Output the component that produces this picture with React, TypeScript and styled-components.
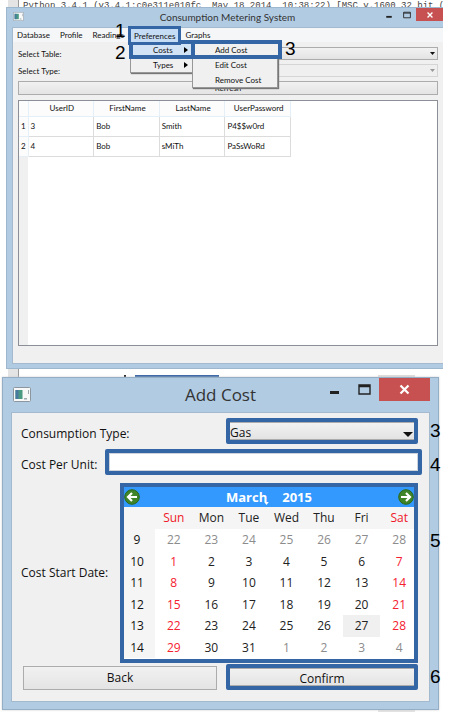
import React from "react";
import styled, { createGlobalStyle, css } from "styled-components";

const BLUE = "#3465a4";
const FRAME = "#b1cbe3";

const Global = createGlobalStyle`
  * { box-sizing: border-box; }
  body { margin: 0; background: #fff; color: #111; font-family: "Open Sans", "Noto Sans", sans-serif; }
  button, input, select { font: inherit; color: inherit; margin: 0; padding: 0; border-radius: 0; }
`;

const Page = styled.div`
  position: relative;
  display: flex;
  flex-direction: column;
  overflow: hidden;
`;

const ConsoleStrip = styled.div`
  height: 7px;
  margin: 0 7px 0 8px;
  padding-left: 15px;
  overflow: hidden;
  white-space: pre;
  font: 9px/13px "Liberation Mono", monospace;
  color: #444;
  background: linear-gradient(90deg, #e4e4e4 10px, #999 10px, #999 11px, #fff 11px);
`;

const MainWindow = styled.section`
  margin: 0 7px 0 6px;
  background: ${FRAME};
  border: 1px solid #9db7cf;
  border-right: 0;
  padding: 0 0 4px 5px;
  font: 8px/10px Lato, "Open Sans", sans-serif;
`;

const TitleBar = styled.header<{ $large?: boolean }>`
  display: grid;
  grid-template-columns: 1fr auto 1fr;
  align-items: start;
  height: ${p => (p.$large ? 34 : 19)}px;
  color: #333;
`;

const Title = styled.h1<{ $large?: boolean }>`
  margin: 0;
  font-weight: 400;
  font-size: ${p => (p.$large ? 17 : 10)}px;
  line-height: ${p => (p.$large ? 34 : 19)}px;
`;

const AppIcon = styled.svg<{ $large?: boolean }>`
  width: ${p => (p.$large ? 18 : 11)}px;
  height: ${p => (p.$large ? 15 : 9)}px;
  margin: ${p => (p.$large ? "9px 0 0 2px" : "4px 0 0 1px")};
`;

const WindowControls = styled.div`
  display: flex;
  justify-content: flex-end;
`;

const WindowButton = styled.button<{ $large?: boolean; $close?: boolean }>`
  display: grid;
  place-items: center;
  border: 0;
  height: ${p => (p.$large ? 23 : 13)}px;
  width: ${p => (p.$large ? (p.$close ? 51 : 30) : p.$close ? 27 : 18)}px;
  background: ${p => (p.$close ? "#c75050" : "transparent")};
  color: ${p => (p.$close ? "#fff" : "#222")};
  svg { width: ${p => (p.$large ? 13 : 8)}px; height: ${p => (p.$large ? 13 : 8)}px; display: block; }
`;

const Client = styled.div`
  background: #f0f0f0;
  border: 1px solid #a3b9cd;
  border-right: 0;
  position: relative;
`;

const MenuBar = styled.nav`
  display: flex;
  height: 14px;
  padding-left: 4px;
  gap: 10px;
  background: #f5f6f8;
`;

const MenuButton = styled.button<{ $open?: boolean }>`
  border: 0;
  background: none;
  line-height: 14px;
  ${p =>
    p.$open &&
    css`
      background: #c5dcf5;
      margin: 0 -4px;
      padding: 0 4px;
      outline: 3px solid ${BLUE};
      outline-offset: -1px;
      height: 15px;
      z-index: 4;
    `}
`;

const Menu = styled.div<{ $sub?: boolean }>`
  position: absolute;
  z-index: ${p => (p.$sub ? 3 : 2)};
  left: ${p => (p.$sub ? 179 : 117)}px;
  top: 13px;
  width: ${p => (p.$sub ? 86 : 64)}px;
  background: #f0f0f0;
  border: 1px solid #979797;
  box-shadow: 1px 1px 1px #777;
  display: flex;
  flex-direction: column;
`;

const MenuItem = styled.button<{ $hot?: boolean; $sub?: boolean }>`
  display: flex;
  align-items: center;
  justify-content: space-between;
  height: 15px;
  border: 0;
  padding: 0 5px 0 22px;
  background: ${p => (p.$hot ? (p.$sub ? "#f0f0f0" : "#d1e3f5") : "none")};
  ${p => p.$hot && css`outline: 4px solid ${BLUE}; outline-offset: -2px;`}
  ${p => p.$sub && css`margin-right: -3px;`}
  svg { width: 4px; height: 6px; }
`;

const Content = styled.div`
  padding: 5px 5px 17px;
  display: flex;
  flex-direction: column;
`;

const Field = styled.div`
  display: flex;
  align-items: center;
  height: 13px;
  margin-bottom: 4px;
  label { flex: 1; }
`;

const SelectBox = styled.span<{ $large?: boolean; $dim?: boolean }>`
  position: relative;
  display: flex;
  flex: 1;
  select {
    appearance: none;
    width: 100%;
    height: ${p => (p.$large ? 24 : 13)}px;
    padding-left: 3px;
    border: 1px solid ${p => (p.$dim ? "#d5d5d5" : "#acacac")};
    background: ${p => (p.$dim ? "#efefef" : "linear-gradient(#f2f2f2, #e3e3e3)")};
    opacity: 1;
  }
  svg {
    position: absolute;
    right: ${p => (p.$large ? 1 : 3)}px;
    top: ${p => (p.$large ? 10 : 5)}px;
    width: ${p => (p.$large ? 10 : 5)}px;
    height: ${p => (p.$large ? 5 : 3)}px;
    fill: ${p => (p.$dim ? "#999" : "#111")};
    pointer-events: none;
  }
`;

const PushButton = styled.button<{ $large?: boolean }>`
  border: 1px solid #acacac;
  background: linear-gradient(#f1f1f1, #e4e4e4);
  height: ${p => (p.$large ? 24 : 14)}px;
`;

const BackButton = styled(PushButton)`
  flex: none;
  width: 194px;
  margin: 1px 0 0 2px;
`;

const TableArea = styled.div`
  margin-top: 5px;
  height: 246px;
  border: 1px solid #8a8f98;
  background: linear-gradient(90deg, #f0f0f0 9px, #fff 9px);
`;

const Table = styled.table`
  table-layout: fixed;
  width: 272px;
  border-collapse: collapse;
  th, td { padding: 0 0 0 2px; font-weight: 400; text-align: left; height: 20px; border-right: 1px solid #dcdcdc; border-bottom: 1px solid #dcdcdc; }
  th { background: #fcfcfc; border-color: #e5eff8; }
  thead th { height: 15px; text-align: center; }
  tbody th { text-align: center; padding: 0; }
`;

const Between = styled.div`
  display: flex;
  align-items: flex-end;
  height: 8px;
  padding: 0 35px 0 8px;
  background: linear-gradient(90deg, transparent 8px, #e4e4e4 8px, #e4e4e4 18px, #999 18px, #999 19px, transparent 19px);
`;

const Strip = styled.i<{ $width: number; $left: number; $tone: string }>`
  width: ${p => p.$width}px;
  height: 2px;
  margin-left: ${p => (p.$left ? `${p.$left}px` : "auto")};
  background: ${p => p.$tone};
`;

const Dialog = styled.section`
  position: relative;
  margin: 0 11px 0 2px;
  padding: 0 8px 7px;
  background: ${FRAME};
  border: 1px solid #94aec6;
  box-shadow: 0 0 2px #ccc;
  font-size: 12px;
  line-height: 16px;
`;

const DialogBody = styled.form`
  display: flex;
  flex-direction: column;
  padding: 5px 7px 11px 9px;
  background: #f0f0f0;
  border: 1px solid #a3b9cd;
`;

const Row = styled.div<{ $wide?: boolean; $after?: number }>`
  display: flex;
  align-items: center;
  margin-right: ${p => (p.$wide ? 0 : 4)}px;
  margin-bottom: ${p => p.$after ?? 0}px;
`;

const Label = styled.label<{ $width: number }>`
  width: ${p => p.$width}px;
  flex: none;
  white-space: nowrap;
`;

const FieldLabel = styled(Label)`
  padding-top: 6px;
`;

const Highlight = styled.div`
  display: flex;
  flex: 1;
  min-width: 0;
  border: 4px solid ${BLUE};
  border-radius: 2px;
  overflow: hidden;
  select, button { flex: 1; height: 18px; border-width: 1px 0; padding: 2px 0 0; }
`;

const ConfirmFrame = styled(Highlight)`
  margin-left: 9px;
`;

const TextInput = styled.input`
  flex: 1;
  min-width: 0;
  height: 18px;
  border: 1px solid #ccd3da;
  background: #fff;
  outline: 0;
`;

const Calendar = styled.div`
  position: relative;
  flex: 1;
  border: 4px solid ${BLUE};
  border-right: 0;
  background: #fff;
  padding-bottom: 1px;
  &::after {
    content: "";
    position: absolute;
    top: 0;
    right: 0;
    bottom: 0;
    width: 4px;
    background: ${BLUE};
  }
`;

const CalendarNav = styled.div`
  display: flex;
  align-items: center;
  justify-content: space-between;
  height: 20px;
  padding-right: 4px;
  background: #39f;
  color: #fff;
  font: bold 13px/16px "Open Sans", sans-serif;
`;

const NavText = styled.span`
  display: flex;
  gap: 15px;
  position: relative;
  svg { position: absolute; left: 38px; top: 13px; width: 5px; height: 3px; }
`;

const NavButton = styled.button`
  border: 0;
  background: none;
  display: flex;
  svg { width: 16px; height: 16px; }
`;

const Days = styled.table`
  width: 100%;
  table-layout: fixed;
  border-collapse: collapse;
  th, td { padding: 0; font-weight: 400; text-align: center; }
  th { background: #f5f5f5; }
  th:first-child { width: 31px; padding-right: 5px; }
`;

const DayRow = styled.tr<{ $tall?: boolean }>`
  height: ${p => (p.$tall ? 22 : 21)}px;
`;

const Day = styled.td<{ $tone: string; $selected?: boolean }>`
  color: ${p => p.$tone};
  background: ${p => (p.$selected ? "#f0f0f0" : "#fff")};
`;

const WeekDay = styled.th<{ $red: boolean }>`
  color: ${p => (p.$red ? "#f01828" : "#222")};
`;

const Footer = styled.div`
  display: flex;
  height: 4px;
  padding-right: 35px;
`;

const Callout = styled.span<{ $x: number; $y: number }>`
  position: absolute;
  z-index: 5;
  left: ${p => p.$x}px;
  top: ${p => p.$y}px;
  font: 19px/20px "Liberation Sans", sans-serif;
  color: #000;
`;

const Arrow = () => <svg viewBox="0 0 10 5" preserveAspectRatio="none" aria-hidden="true"><path d="M0 0h10L5 5z" /></svg>;
const SubArrow = () => <svg viewBox="0 0 4 6" aria-hidden="true"><path d="M0 0v6l4-3z" /></svg>;

const WindowIcon = ({ large }: { large?: boolean }) => (
  <AppIcon $large={large} viewBox="0 0 18 15" aria-hidden="true">
    <rect x=".5" y=".5" width="17" height="14" rx="1" fill="#f8f8f8" stroke="#8b969e" />
    <rect x="2.5" y="3" width="7" height="9" fill="#4a9a83" />
    <path d="M2.5 3h3v9h-3z" fill="#487aa0" />
    <path d="M11 11h3v1.500h-3zM15 3h1v4h-1z" fill="#9caab2" />
  </AppIcon>
);

const Controls = ({ large }: { large?: boolean }) => (
  <WindowControls>
    <WindowButton type="button" $large={large} aria-label="Minimize">
      <svg viewBox="0 0 13 13"><path d="M2 8h9v3H2z" fill="currentColor" /></svg>
    </WindowButton>
    <WindowButton type="button" $large={large} aria-label="Maximize">
      <svg viewBox="0 0 13 13"><path d="M1 2h11v9H1zM1 3.500h11" fill="none" stroke="currentColor" strokeWidth="1.400" /></svg>
    </WindowButton>
    <WindowButton type="button" $large={large} $close aria-label="Close">
      <svg viewBox="0 0 13 13"><path d="M2.500 2.500l8 8M10.500 2.500l-8 8" stroke="currentColor" strokeWidth="2.200" /></svg>
    </WindowButton>
  </WindowControls>
);

const GreenArrow = ({ next }: { next?: boolean }) => (
  <NavButton type="button" aria-label={next ? "Next month" : "Previous month"}>
    <svg viewBox="0 0 16 16">
      <circle cx="8" cy="8" r="7.300" fill="#3f8428" stroke="#2b681c" />
      <path
        d={next ? "M3 8h9M8 4l4 4-4 4" : "M13 8H4M8 4L4 8l4 4"}
        fill="none" stroke="#fff" strokeWidth="2.200"
      />
    </svg>
  </NavButton>
);

const weekdays = ["Sun", "Mon", "Tue", "Wed", "Thu", "Fri", "Sat"];
const weeks = [
  [9, 22, 23, 24, 25, 26, 27, 28],
  [10, 1, 2, 3, 4, 5, 6, 7],
  [11, 8, 9, 10, 11, 12, 13, 14],
  [12, 15, 16, 17, 18, 19, 20, 21],
  [13, 22, 23, 24, 25, 26, 27, 28],
  [14, 29, 30, 31, 1, 2, 3, 4],
];

const toneOf = (week: number, day: number, date: number) => {
  if (week === 0 || (week === 5 && date < 10)) return "#8c8c8c";
  return day === 0 || day === 6 ? "#f52030" : "#222";
};

const users = [
  ["3", "Bob", "Smith", "P4$$w0rd"],
  ["4", "Bob", "sMiTh", "PaSsWoRd"],
];

const callouts = [
  ["1", 115, 21], ["2", 115, 43], ["3", 285, 39],
  ["3", 430, 421], ["4", 430, 455], ["5", 430, 531], ["6", 430, 667],
] as const;

export default function App() {
  return (
    <Page>
      <Global />
      <ConsoleStrip>{"Python 3.4.1 (v3.4.1:c0e311e010fc, May 18 2014, 10:38:22) [MSC v.1600 32 bit (I"}</ConsoleStrip>
      <MainWindow>
        <TitleBar>
          <WindowIcon />
          <Title>Consumption Metering System</Title>
          <Controls />
        </TitleBar>
        <Client>
          <MenuBar>
            <MenuButton>Database</MenuButton>
            <MenuButton>Profile</MenuButton>
            <MenuButton>Readings</MenuButton>
            <MenuButton $open>Preferences</MenuButton>
            <MenuButton>Graphs</MenuButton>
          </MenuBar>
          <Menu>
            <MenuItem $hot>Costs<SubArrow /></MenuItem>
            <MenuItem>Types<SubArrow /></MenuItem>
          </Menu>
          <Menu $sub>
            <MenuItem $hot $sub>Add Cost</MenuItem>
            <MenuItem>Edit Cost</MenuItem>
            <MenuItem>Remove Cost</MenuItem>
          </Menu>
          <Content>
            <Field>
              <label htmlFor="table">Select Table:</label>
              <SelectBox><select id="table" /><Arrow /></SelectBox>
            </Field>
            <Field>
              <label htmlFor="type">Select Type:</label>
              <SelectBox $dim><select id="type" disabled /><Arrow /></SelectBox>
            </Field>
            <PushButton>Refresh</PushButton>
            <TableArea>
              <Table>
                <colgroup><col width="9" /><col /><col /><col /><col /></colgroup>
                <thead>
                  <tr><th /><th>UserID</th><th>FirstName</th><th>LastName</th><th>UserPassword</th></tr>
                </thead>
                <tbody>
                  {users.map((u, i) => (
                    <tr key={i}><th>{i + 1}</th>{u.map((v, j) => <td key={j}>{v}</td>)}</tr>
                  ))}
                </tbody>
              </Table>
            </TableArea>
          </Content>
        </Client>
      </MainWindow>
      <Between>
        <Strip $width={2} $left={116} $tone="#222" />
        <Strip $width={84} $left={9} $tone={BLUE} />
        <Strip $width={37} $left={0} $tone="#ddd" />
      </Between>
      <Dialog>
        <TitleBar $large>
          <WindowIcon large />
          <Title $large>Add Cost</Title>
          <Controls large />
        </TitleBar>
        <DialogBody onSubmit={e => e.preventDefault()}>
          <Row $after={5}>
            <FieldLabel $width={205} htmlFor="ctype">Consumption Type:</FieldLabel>
            <Highlight>
              <SelectBox $large><select id="ctype"><option>Gas</option></select><Arrow /></SelectBox>
            </Highlight>
          </Row>
          <Row $wide $after={8}>
            <FieldLabel $width={84} htmlFor="unit">Cost Per Unit:</FieldLabel>
            <Highlight><TextInput id="unit" /></Highlight>
          </Row>
          <Row $after={1}>
            <Label as="span" $width={99}>Cost Start Date:</Label>
            <Calendar role="group" aria-label="Cost Start Date">
              <CalendarNav>
                <GreenArrow />
                <NavText><span>March</span><span>2015</span><svg viewBox="0 0 6 4"><path d="M0 0h6L3 4z" fill="#fff" /></svg></NavText>
                <GreenArrow next />
              </CalendarNav>
              <Days>
                <thead>
                  <DayRow $tall><th />{weekdays.map((d, i) => <WeekDay key={d} $red={i === 0 || i === 6}>{d}</WeekDay>)}</DayRow>
                </thead>
                <tbody>
                  {weeks.map(([no, ...days], w) => (
                    <DayRow key={no} $tall={w % 2 === 0}>
                      <th>{no}</th>
                      {days.map((d, i) => (
                        <Day key={i} $tone={toneOf(w, i, d)} $selected={w === 4 && d === 27}>{d}</Day>
                      ))}
                    </DayRow>
                  ))}
                </tbody>
              </Days>
            </Calendar>
          </Row>
          <Row>
            <BackButton $large type="button">Back</BackButton>
            <ConfirmFrame><PushButton $large>Confirm</PushButton></ConfirmFrame>
          </Row>
        </DialogBody>
      </Dialog>
      <Footer><Strip $width={37} $left={0} $tone="#e4e4e4" /></Footer>
      {callouts.map(([n, x, y]) => <Callout key={y} $x={x} $y={y}>{n}</Callout>)}
    </Page>
  );
}
